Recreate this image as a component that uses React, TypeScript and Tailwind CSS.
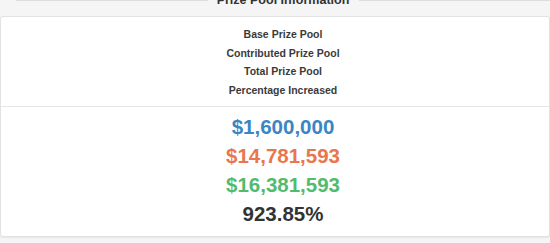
import React from "react";

const labels = ["Base Prize Pool", "Contributed Prize Pool", "Total Prize Pool", "Percentage Increased"];
const values: { v: string; c: string }[] = [
  { v: "$1,600,000", c: "text-[#3a86c4]" },
  { v: "$14,781,593", c: "text-[#e8764e]" },
  { v: "$16,381,593", c: "text-[#52bb6e]" },
  { v: "923.85%", c: "text-[#333333]" },
];

export default function App() {
  return (
    <div
      className="w-[550px] h-[243px] overflow-hidden bg-[#f5f5f5] flex flex-col"
      style={{ fontFamily: '"Liberation Sans", Arial, sans-serif' }}
    >
      <div className="h-[16px] shrink-0 flex pl-[16px]">
        <div className="flex-1 border-t border-[#dddddd]" />
        <div className="w-[151px] flex justify-center overflow-visible">
          <span className="block mt-[-7px] text-[12.5px] leading-[14px] font-bold text-[#333333] whitespace-nowrap">
            Prize Pool Information
          </span>
        </div>
        <div className="flex-1 border-t border-[#dddddd]" />
      </div>
      <div className="w-[550px] h-[221px] shrink-0 bg-white border border-[#e2e2e2] rounded-[3px] shadow-[0_1px_1px_rgba(0,0,0,0.06)] flex flex-col">
        <div className="pl-[16px] pt-[8px] pb-[7px] flex flex-col items-center border-b border-[#e6e6e6]">
          {labels.map((l) => (
            <div key={l} className="text-[10.5px] leading-[18.5px] font-bold text-[#3a3a3a] whitespace-nowrap">
              {l}
            </div>
          ))}
        </div>
        <div className="pl-[16px] pt-[5px] flex flex-col items-center">
          {values.map((x) => (
            <div key={x.v} className={`text-[20.5px] leading-[29px] font-bold whitespace-nowrap ${x.c}`}>
              {x.v}
            </div>
          ))}
        </div>
      </div>
    </div>
  );
}
